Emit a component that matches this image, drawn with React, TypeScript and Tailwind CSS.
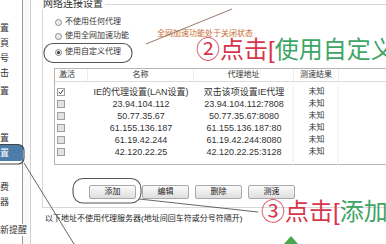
import React from "react";

const FONT = { fontFamily: '"Liberation Sans", "Noto Sans CJK SC", sans-serif' };

const sideItems: { t: string; mt: number; sel?: boolean }[] = [
  { t: "置", mt: 22 },
  { t: "頁", mt: 3 },
  { t: "号", mt: 3 },
  { t: "击", mt: 3 },
  { t: "置", mt: 6 },
  { t: "置", mt: 35 },
  { t: "置", mt: 1, sel: true },
  { t: "费", mt: 20 },
  { t: "器", mt: 3 },
];

const rows = [
  { checked: true, name: "IE的代理设置(LAN设置)", addr: "双击该项设置IE代理" },
  { checked: false, name: "23.94.104.112", addr: "23.94.104.112:7808" },
  { checked: false, name: "50.77.35.67", addr: "50.77.35.67:8080" },
  { checked: false, name: "61.155.136.187", addr: "61.155.136.187:80" },
  { checked: false, name: "61.19.42.244", addr: "61.19.42.244:8080" },
  { checked: false, name: "42.120.22.25", addr: "42.120.22.25:3128" },
];

function Radio({ on }: { on?: boolean }) {
  return (
    <span className="w-[7px] h-[7px] rounded-full border border-[#8c8c8c] bg-[#ececec] flex items-center justify-center shrink-0">
      {on && <span className="w-[3px] h-[3px] rounded-full bg-[#333]" />}
    </span>
  );
}

function Check({ on }: { on?: boolean }) {
  return (
    <span
      className={
        "w-[8px] h-[8px] border border-[#a0a0a0] flex items-center justify-center " +
        (on ? "bg-white" : "bg-[#e2e2e2]")
      }
    >
      {on && (
        <svg width="6" height="6" viewBox="0 0 6 6">
          <path d="M0.8 3 L2.4 4.8 L5.3 0.8" stroke="#333" strokeWidth="1" fill="none" />
        </svg>
      )}
    </span>
  );
}

function Btn({ label }: { label: string }) {
  return (
    <div className="w-[47px] h-[14px] border border-[#a9a9a9] rounded-[2px] bg-gradient-to-b from-[#fbfbfb] to-[#dedede] flex items-center justify-center text-[8px] leading-none text-[#222]">
      {label}
    </div>
  );
}

export default function App() {
  return (
    <div className="relative w-[386px] h-[244px] overflow-hidden bg-white flex text-[#333]" style={FONT}>
      {/* sidebar */}
      <aside className="w-[23px] shrink-0 border-r border-[#9a9a9a] flex flex-col text-[9px] leading-none">
        {sideItems.map((s, i) => (
          <div
            key={i}
            className={
              "h-[12px] flex items-center " +
              (s.sel ? "bg-[#4d7cab] text-white w-[23px] h-[16px] rounded-r-[3px]" : "")
            }
            style={{ marginTop: s.mt }}
          >
            {s.t}
          </div>
        ))}
        <div className="mt-[16px] h-[12px] flex items-center whitespace-nowrap relative z-10 bg-white w-[29px] text-[9px]">
          新提醒
        </div>
      </aside>
      <div className="w-[8px] shrink-0 border-r border-[#cfcfcf] bg-[#fafafa]" />

      {/* main */}
      <main className="flex-1 flex flex-col pl-[11px]">
        <div className="flex items-center h-[10px] -mt-[1px]">
          <span className="text-[10px] leading-none text-[#333] pl-[1px] pr-[2px] whitespace-nowrap">网络连接设置</span>
          <div className="flex-1 h-px bg-[#d8d8d8]" />
        </div>
        <div className="border-l border-b border-[#d8d8d8] flex flex-col pl-[11px] pb-[8px] -mr-[20px]">
          <div className="flex items-center gap-[2px] h-[14px] mt-[6px] pl-[1px] text-[8px] leading-none">
            <Radio />
            <span className="ml-[1px]">不使用任何代理</span>
          </div>
          <div className="flex items-center gap-[2px] h-[14px] pl-[1px] text-[8px] leading-none">
            <Radio />
            <span className="ml-[1px]">使用全网加速功能</span>
          </div>
          <div className="flex items-center gap-[2px] h-[14px] mt-[2px] pl-[1px] text-[8px] leading-none">
            <Radio on />
            <span className="ml-[1px]">使用自定义代理</span>
          </div>

          {/* table */}
          <div className="mt-[9px] w-[345px] h-[97px] border border-[#b4b4b4] bg-white flex flex-col text-[9px] leading-none">
            <div className="h-[13px] flex border-b border-[#dcdcdc] shrink-0 text-[8px]">
              <div className="w-[33px] flex items-center pl-[4px] border-r border-[#ececec]">激活</div>
              <div className="w-[106px] flex items-center justify-center border-r border-[#ececec]">名称</div>
              <div className="w-[100px] flex items-center justify-center border-r border-[#ececec]">代理地址</div>
              <div className="w-[45px] flex items-center justify-center border-r border-[#ececec]">测速结果</div>
              <div className="flex-1" />
            </div>
            <div className="flex-1 flex pt-[4px]">
              <div className="flex-1 flex flex-col">
                {rows.map((r, i) => (
                  <div key={i} className="h-[12px] flex">
                    <div className="w-[33px] flex items-center pl-[2px]">
                      <Check on={r.checked} />
                    </div>
                    <div className="w-[106px] flex items-center justify-center whitespace-nowrap">{r.name}</div>
                    <div className="w-[100px] flex items-center justify-center whitespace-nowrap">{r.addr}</div>
                    <div className="w-[45px] flex items-center justify-center text-[8px]">未知</div>
                    <div className="flex-1" />
                  </div>
                ))}
              </div>
            </div>
          </div>

          {/* buttons */}
          <div className="flex gap-[6px] mt-[20px] ml-[35px]">
            <Btn label="添加" />
            <Btn label="编辑" />
            <Btn label="删除" />
            <Btn label="测速" />
          </div>
        </div>
        <div className="mt-[7px] pl-[3px] text-[8px] leading-none whitespace-nowrap text-[#222]">
          以下地址不使用代理服务器(地址间回车符或分号符隔开)
        </div>
      </main>

      {/* annotations */}
      <span className="absolute left-[157px] top-[30px] text-[8px] leading-none text-[#c86a32] whitespace-nowrap">
        全网加速功能处于关闭状态
      </span>
      <div className="absolute left-[196px] top-[38px] text-[24px] leading-none whitespace-nowrap">
        <span className="text-[#d6364a]">②点击[</span>
        <span className="text-[#3ea566]">使用自定义</span>
      </div>
      <div className="absolute left-[261px] top-[200px] text-[24px] leading-none whitespace-nowrap">
        <span className="text-[#d6364a]">③点击[</span>
        <span className="text-[#3ea566]">添加</span>
      </div>
      <svg className="absolute left-0 top-0 pointer-events-none" width="386" height="244">
        <rect x="44" y="43.5" width="88" height="19" rx="9" fill="none" stroke="#555" strokeWidth="1.1" />
        <line x1="146" y1="44" x2="232" y2="9" stroke="#8a6a5a" strokeWidth="0.9" />
        <rect x="73" y="178.5" width="68" height="24.5" rx="10" fill="none" stroke="#555" strokeWidth="1.1" />
        <line x1="139" y1="199" x2="258" y2="212" stroke="#555" strokeWidth="0.9" />
        <rect x="-14" y="144.5" width="38" height="19.5" rx="6" fill="none" stroke="#444" strokeWidth="1.1" />
        <line x1="24" y1="163" x2="74" y2="244" stroke="#555" strokeWidth="0.9" />
        <line x1="293" y1="86" x2="293" y2="165" stroke="#ececec" strokeWidth="1" />
        <line x1="338" y1="86" x2="338" y2="165" stroke="#ececec" strokeWidth="1" />
        <polygon points="291,236 284,244 298,244" fill="#45a84e" />
      </svg>
    </div>
  );
}
